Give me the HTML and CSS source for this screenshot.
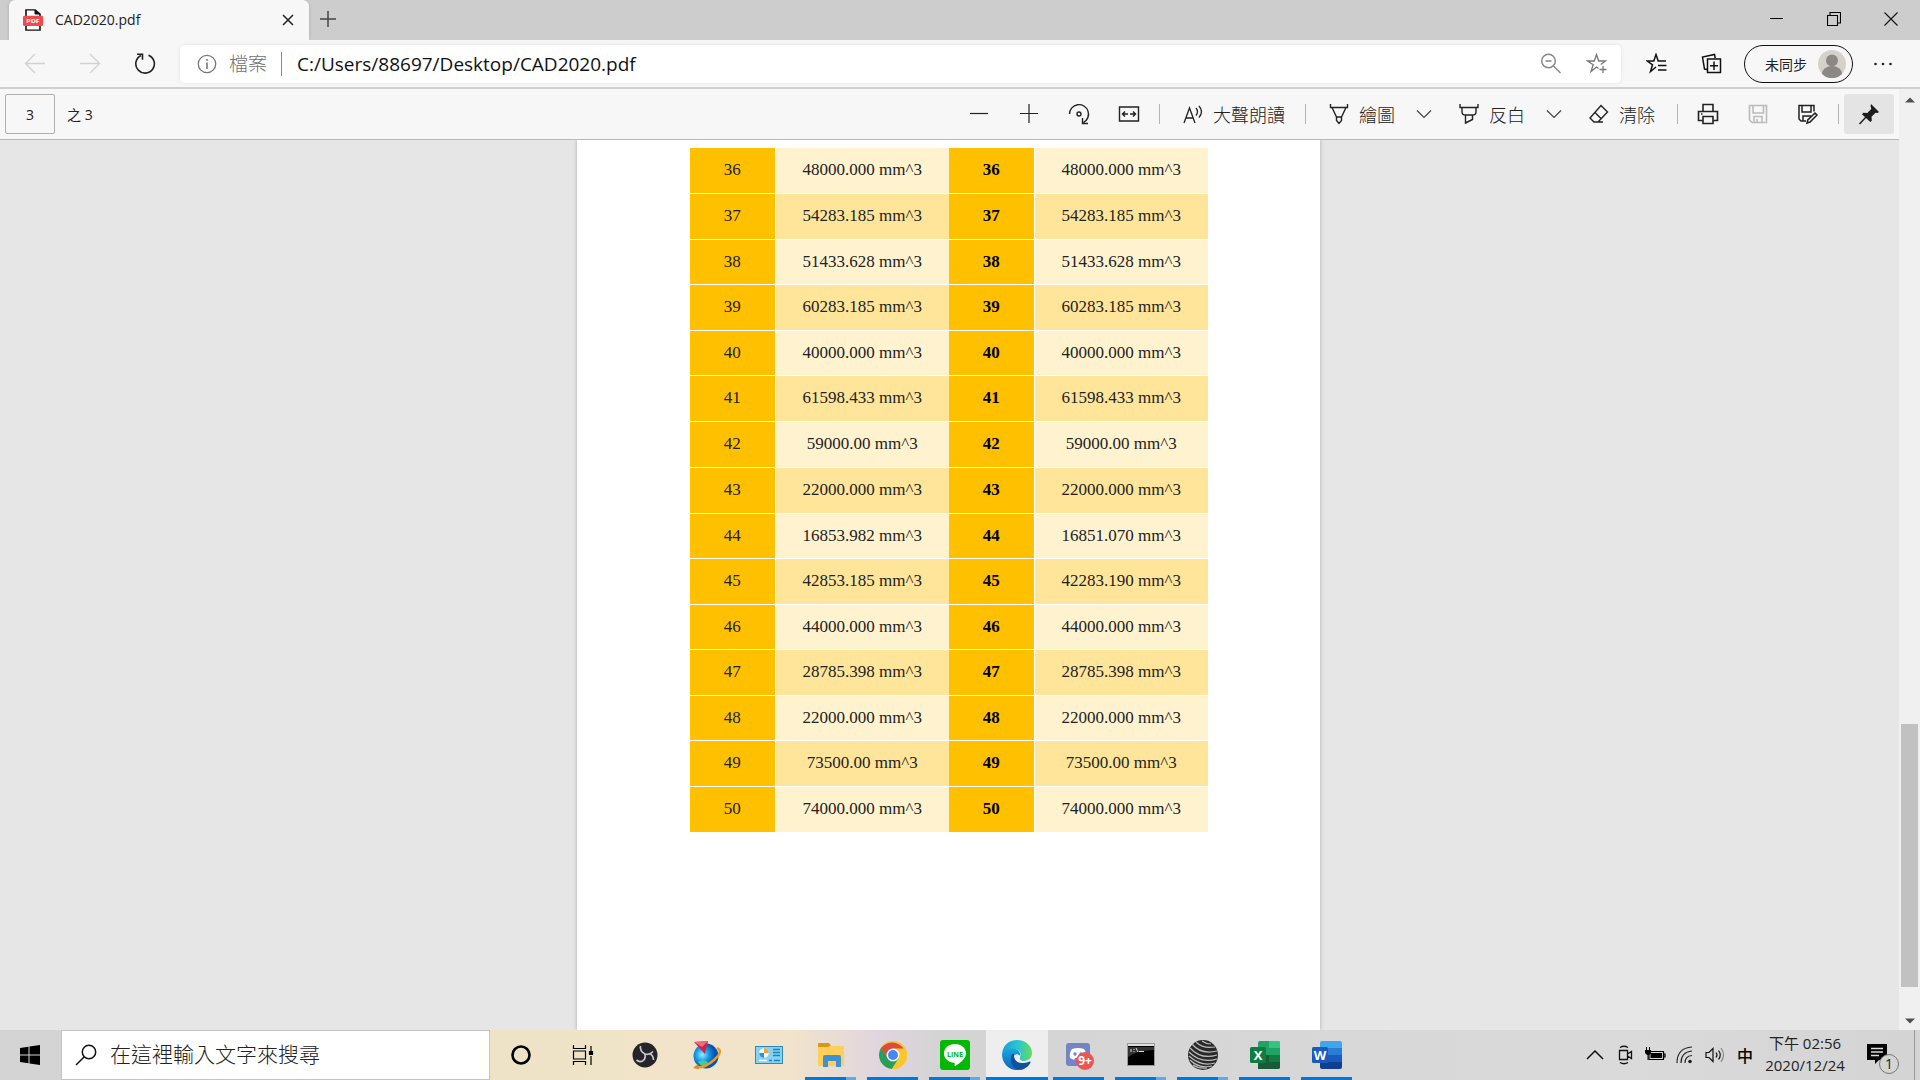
FILE: index.html
```html
<!DOCTYPE html>
<html lang="zh-Hant">
<head>
<meta charset="utf-8">
<title>CAD2020.pdf</title>
<link rel="stylesheet" href="styles.css">
</head>
<body>
<div class="screen">
  <header class="tabbar">
    <div class="tab">
      <svg class="tab-icon" width="20" height="22" viewBox="0 0 20 26" preserveAspectRatio="none"><path d="M3 1h9l5 5v19H3z" fill="#fff" stroke="#111" stroke-width="1.6"/><path d="M12 1v5h5z" fill="#111" stroke="#111"/><rect y="8" width="20" height="12" rx="1.5" fill="#f24a4a"/><text x="10" y="17" class="pdf-label">PDF</text></svg>
      <span class="tab-title">CAD2020.pdf</span>
      <button class="tab-close" aria-label="關閉索引標籤"><svg width="12" height="12" viewBox="0 0 12 12"><path d="M1 1l10 10M11 1L1 11" stroke="#222" stroke-width="1.5"/></svg></button>
    </div>
    <button class="new-tab" aria-label="新索引標籤"><svg width="16" height="16" viewBox="0 0 16 16"><path d="M8 0v16M0 8h16" stroke="#444" stroke-width="1.5"/></svg></button>
    <div class="window-controls">
      <button aria-label="最小化"><svg width="14" height="14" viewBox="0 0 14 14"><path d="M0 6.5h13" stroke="#000"/></svg></button>
      <button aria-label="還原"><svg width="14" height="14" viewBox="0 0 14 14"><path d="M.5 3.500h10v10H.5zM3 3V.5h10.500V11H11" fill="none" stroke="#000" stroke-width="1.1"/></svg></button>
      <button aria-label="關閉"><svg width="14" height="14" viewBox="0 0 14 14"><path d="M.5.5l13 13M13.500.5l-13 13" stroke="#111" stroke-width="1.1"/></svg></button>
    </div>
  </header>

  <nav class="navbar">
    <button class="nav-button" aria-label="上一頁" disabled><svg width="22" height="22" viewBox="0 0 22 22"><path d="M21 10.500H2M11 1l-9.500 9.500L11 20" fill="none" stroke="#d2d2d2" stroke-width="1.4"/></svg></button>
    <button class="nav-button" aria-label="下一頁" disabled><svg width="22" height="22" viewBox="0 0 22 22"><path d="M1 10.500h19M11 1l9.500 9.500L11 20" fill="none" stroke="#d2d2d2" stroke-width="1.4"/></svg></button>
    <button class="nav-button" aria-label="重新整理"><svg width="22" height="22" viewBox="0 0 22 22"><path d="M14.500 2.200A9.300 9.300 0 1 1 7 2.500M3 1.200h5.500v5.500" fill="none" stroke="#222" stroke-width="1.6"/></svg></button>
    <div class="address">
      <svg width="20" height="20" viewBox="0 0 20 20" fill="none" stroke="#777" stroke-width="1.3"><circle cx="10" cy="10" r="8.700"/><path d="M10 8.500V15M10 5v1.700" stroke-width="1.600"/></svg>
      <span class="scheme">檔案</span>
      <input class="url" aria-label="網址" value="C:/Users/88697/Desktop/CAD2020.pdf">
      <button class="address-button" aria-label="縮放"><svg width="22" height="22" viewBox="0 0 22 22" fill="none" stroke="#858585" stroke-width="1.4"><circle cx="8.500" cy="8" r="6.800"/><path d="M5.500 8h6M13.500 13l7 7"/></svg></button>
      <button class="address-button" aria-label="加入我的最愛"><svg width="22" height="22" viewBox="0 0 22 22" fill="none" stroke="#777" stroke-width="1.300"><path d="M12.500 15.500L10.500 14 5 18.500l2.200-6.700L1.500 8h6.800l2.200-6.500L12.700 8h6.800l-4.700 3.500M17 13v7M13.500 16.500h7"/></svg></button>
    </div>
    <button class="hub-button" aria-label="我的最愛"><svg width="22" height="22" viewBox="0 0 22 22" fill="none" stroke="#111" stroke-width="1.5"><path d="M10 14L4.500 18.500l2-6.700L1.200 8h6.600L10 1.500 12.200 8H20M12 12.500h8.500M12 17h8.500"/></svg></button>
    <button class="hub-button" aria-label="集錦"><svg width="22" height="22" viewBox="0 0 22 22" fill="none" stroke="#111" stroke-width="1.5"><path d="M6 16.500L3.500 16 1.500 4l12-2.500.7 3.500M6.500 6h13v13.500h-13zM13 8.500v8.500M9 12.800h8"/></svg></button>
    <button class="profile"><span>未同步</span><svg width="28" height="28" viewBox="0 0 28 28"><circle cx="14" cy="14" r="14" fill="#d5d2ce"/><circle cx="14" cy="10.500" r="6" fill="#8c8886"/><path d="M4 24a10 8 0 0 1 20 0 14 14 0 0 1-20 0z" fill="#8c8886"/></svg></button>
    <button class="more" aria-label="設定及其他"><svg width="20" height="4" viewBox="0 0 20 4" fill="#222"><circle cx="2.500" cy="2" r="1.300"/><circle cx="10" cy="2" r="1.300"/><circle cx="17.500" cy="2" r="1.300"/></svg></button>
  </nav>

  <main class="viewer">
    <section class="document">
      <div class="pdf-toolbar">
        <input class="page-number" id="page-number" value="3">
        <label class="page-total" for="page-number">之 3</label>
        <div class="tools">
          <button class="tool" aria-label="縮小"><svg width="20" height="20" viewBox="0 0 20 20"><path d="M1 9.500h18" stroke="#222" stroke-width="1.200"/></svg></button>
          <button class="tool" aria-label="放大"><svg width="20" height="20" viewBox="0 0 20 20"><path d="M1 9.500h18M10 0v19" stroke="#222" stroke-width="1.200"/></svg></button>
          <button class="tool" aria-label="旋轉"><svg width="22" height="22" viewBox="0 0 22 22" fill="none" stroke="#222" stroke-width="1.400"><path d="M1.500 11A9.500 9.500 0 1 1 15.500 19.500M20 20.500H14.500v-5.500"/><circle cx="11" cy="11" r="2"/></svg></button>
          <button class="tool" aria-label="調整成頁面寬度"><svg width="22" height="20" viewBox="0 0 22 20" fill="none" stroke="#222" stroke-width="1.400"><path d="M1.500 3h19v14h-19zM4.500 10H10M12 10h5.500M7 7.500L4.500 10 7 12.500M15 7.500l2.500 2.500-2.500 2.500"/></svg></button>
          <span class="divider"></span>
          <button class="tool-label read"><svg width="20" height="20" viewBox="0 0 20 20" fill="none" stroke="#222" stroke-width="1.300"><path d="M1 19L6.500 4 12 19M3 14h7M13 4q3 3.500 0 7.500M16 2q5 5.500 0 11.500"/></svg>大聲朗讀</button>
          <span class="divider"></span>
          <button class="tool-label draw"><svg width="20" height="22" viewBox="0 0 20 22" fill="none" stroke="#222" stroke-width="1.400"><path d="M1.500 1v3.500h17V1M3 4.500l4.500 9.500h5L17 4.500M7.500 14v3.500L10 20.500l2.500-3V14"/></svg>繪圖</button>
          <button class="tool-menu" aria-label="繪圖選項"><svg width="16" height="10" viewBox="0 0 16 10"><path d="M1 1.500l7 7 7-7" fill="none" stroke="#444" stroke-width="1.200"/></svg></button>
          <button class="tool-label"><svg width="20" height="22" viewBox="0 0 20 22" fill="none" stroke="#222" stroke-width="1.400"><path d="M1 1v3.500h18V1M3 4.500V9q0 3 3.500 3h7Q17 12 17 9V4.500M6.500 12v8l7-3.500V12"/></svg>反白</button>
          <button class="tool-menu" aria-label="反白選項"><svg width="16" height="10" viewBox="0 0 16 10"><path d="M1 1.500l7 7 7-7" fill="none" stroke="#444" stroke-width="1.200"/></svg></button>
          <button class="tool-label clear"><svg width="20" height="20" viewBox="0 0 20 20" fill="none" stroke="#222" stroke-width="1.400"><path d="M12 1.500l6.500 6.500L9 18H5l-4-4zM5.500 8l6.500 6.500M5 18h9"/></svg>清除</button>
          <span class="divider"></span>
          <button class="tool" aria-label="列印"><svg width="22" height="22" viewBox="0 0 22 22" fill="none" stroke="#222" stroke-width="1.600"><path d="M6 8V1.500h10V8M6 17.500H1.500V8.500h19v9H16M6 13.500h10v7H6zM4 11h1.500"/></svg></button>
          <button class="tool" aria-label="儲存" disabled><svg width="20" height="22" viewBox="0 0 20 22" fill="none" stroke="#bbb" stroke-width="1.600"><path d="M1.500 2.500h17v17H4l-2.500-2.500zM5 2.500V10h10.500V2.500M6 19.500v-6h8v6M9 16v3"/></svg></button>
          <button class="tool" aria-label="另存新檔"><svg width="22" height="22" viewBox="0 0 22 22" fill="none" stroke="#222" stroke-width="1.500"><path d="M17 8.500v-6H2V16l2 2h5M5 2.500V9h9V2.500M6 18v-5h8M10 20l.8-3L18 10l2 2-7 7z"/></svg></button>
          <span class="divider"></span>
          <button class="tool pinned" aria-label="釘選工具列"><svg width="22" height="22" viewBox="0 0 22 22"><path d="M13 1l8 8-1.500 1-2-.3-4 4 .3 4-1.500 1.300L4 11.200 5.300 9.800l4 .2 4-4-.7-3z" fill="#1c1c1c"/><path d="M9 13L1.500 21" stroke="#1c1c1c" stroke-width="1.500"/></svg></button>
        </div>
      </div>
      <div class="canvas">
        <article class="page">
          <table class="answers">
            <tbody>
              <tr><td>36</td><td>48000.000 mm^3</td><th>36</th><td>48000.000 mm^3</td></tr>
              <tr><td>37</td><td>54283.185 mm^3</td><th>37</th><td>54283.185 mm^3</td></tr>
              <tr><td>38</td><td>51433.628 mm^3</td><th>38</th><td>51433.628 mm^3</td></tr>
              <tr><td>39</td><td>60283.185 mm^3</td><th>39</th><td>60283.185 mm^3</td></tr>
              <tr><td>40</td><td>40000.000 mm^3</td><th>40</th><td>40000.000 mm^3</td></tr>
              <tr><td>41</td><td>61598.433 mm^3</td><th>41</th><td>61598.433 mm^3</td></tr>
              <tr><td>42</td><td>59000.00 mm^3</td><th>42</th><td>59000.00 mm^3</td></tr>
              <tr><td>43</td><td>22000.000 mm^3</td><th>43</th><td>22000.000 mm^3</td></tr>
              <tr><td>44</td><td>16853.982 mm^3</td><th>44</th><td>16851.070 mm^3</td></tr>
              <tr><td>45</td><td>42853.185 mm^3</td><th>45</th><td>42283.190 mm^3</td></tr>
              <tr><td>46</td><td>44000.000 mm^3</td><th>46</th><td>44000.000 mm^3</td></tr>
              <tr><td>47</td><td>28785.398 mm^3</td><th>47</th><td>28785.398 mm^3</td></tr>
              <tr><td>48</td><td>22000.000 mm^3</td><th>48</th><td>22000.000 mm^3</td></tr>
              <tr><td>49</td><td>73500.00 mm^3</td><th>49</th><td>73500.00 mm^3</td></tr>
              <tr><td>50</td><td>74000.000 mm^3</td><th>50</th><td>74000.000 mm^3</td></tr>
            </tbody>
          </table>
        </article>
      </div>
    </section>
    <div class="scrollbar">
      <svg width="10" height="6" viewBox="0 0 10 6"><path d="M0 5.500L5 .5l5 5z" fill="#505050"/></svg>
      <div class="track"><div class="thumb"></div></div>
      <svg width="10" height="6" viewBox="0 0 10 6"><path d="M0 .5l5 5 5-5z" fill="#505050"/></svg>
    </div>
  </main>

  <footer class="taskbar">
    <button class="start" aria-label="開始"><svg width="20" height="20" viewBox="0 0 20 20"><path d="M0 3l8.500-1.300v7.800H0zM9.500 1.500L20 0v9.500H9.500zM0 10.500h8.500v7.800L0 17zM9.500 10.500H20V20L9.500 18.500z"/></svg></button>
    <label class="search">
      <svg width="22" height="22" viewBox="0 0 22 22" fill="none" stroke="#111" stroke-width="1.500"><circle cx="14" cy="8" r="6.700"/><path d="M9.300 12.700L1 21"/></svg>
      <input placeholder="在這裡輸入文字來搜尋" aria-label="搜尋">
    </label>
    <div class="apps">
      <button class="app" aria-label="Cortana"><svg width="20" height="20" viewBox="0 0 20 20"><circle cx="10" cy="10" r="8.500" fill="none" stroke="#000" stroke-width="2.600"/></svg></button>
      <button class="app" aria-label="工作檢視"><svg width="22" height="20" viewBox="0 0 22 20" fill="none" stroke="#000" stroke-width="1.200"><path d="M1.500 0v3.500h12V0M1.500 20v-3.500h12V20M1.500 6h12v8h-12zM19 1v5M19 11v9"/><path d="M17.500 6.500h3v3h-3z" fill="#000"/></svg></button>
      <button class="app" aria-label="OBS"><svg width="26" height="26" viewBox="0 0 26 26"><circle cx="13" cy="13" r="12.500" fill="#24242a"/><g fill="none" stroke="#c9c9cb" stroke-width="1.700"><path d="M8.500 4q-1 5 4.500 8 4.500 1.500 8-2.500"/><path d="M13 12q1 5-2.500 7-3 1.500-6-1"/><path d="M17 11.500q4.500 1.500 4.500 6.500"/></g></svg></button>
      <button class="app" aria-label="地球"><svg width="30" height="30" viewBox="0 0 30 30"><defs><radialGradient id="globe" cx=".35" cy=".45"><stop offset="0" stop-color="#8ef0ff"/><stop offset=".5" stop-color="#1b9fe8"/><stop offset="1" stop-color="#0753b5"/></radialGradient></defs><circle cx="14" cy="16" r="12.500" fill="url(#globe)"/><path d="M6 22q4-3 8-1t-1 5q-5 0-7-4z" fill="#43c9a0"/><path d="M25 8q7 3-3 12T3 27" fill="none" stroke="#e99b24" stroke-width="2.400"/><path d="M1 28l5-4 1 5z" fill="#e9851c"/><path d="M2 2l14-1-3 13z" fill="#c8274c"/><path d="M2 2l14-1-6 6z" fill="#ef6981"/></svg></button>
      <button class="app" aria-label="控制台"><svg width="28" height="20" viewBox="0 0 28 20"><rect x=".5" y="1.500" width="27" height="17" fill="#83d4f4" stroke="#3188bb"/><circle cx="9" cy="8" r="4.800" fill="#eef9ff"/><path d="M9 3.200V8h4.800A4.800 4.800 0 0 0 9 3.200z" fill="#f2a03a"/><path d="M9 8H4.200A4.800 4.800 0 0 0 9 12.800z" fill="#3a8cd0"/><path d="M18 4.500h7M18 7.500h7M18 10.500h7M14 15.500h3M19 15.500h6" stroke="#267fb5" stroke-width="1.400"/><path d="M4 15.500h8" stroke="#fff" stroke-width="1.500"/></svg></button>
      <button class="app running stacked" aria-label="檔案總管"><svg width="28" height="26" viewBox="0 0 28 26"><path d="M1 2q0-1 1-1h10l2 3v4H1z" fill="#d99a11"/><path d="M1 5h10l2-1h14v20H1z" fill="#fed05a"/><path d="M6 25V15q0-2 2-2h14q2 0 2 2v10h-5v-6h-8v6z" fill="#3f91d1"/></svg></button>
      <button class="app running" aria-label="Chrome"><svg width="28" height="28" viewBox="0 0 28 28"><circle cx="14" cy="14" r="14" fill="#fbc52f"/><path d="M14 14H27A14 14 0 0 0 1.900 7L8 17z" fill="#dc4b3e"/><path d="M1.900 7A14 14 0 0 0 13 28l6.500-10.500L14 14 8.500 17z" fill="#23a05a"/><path d="M14 7.500h12.400A14 14 0 0 1 13 28l6.500-10.500z" fill="#fbc52f"/><circle cx="14" cy="14" r="6.500" fill="#fff"/><circle cx="14" cy="14" r="5" fill="#4688f1"/></svg></button>
      <button class="app running stacked" aria-label="LINE"><svg width="30" height="30" viewBox="0 0 30 30"><rect width="30" height="30" rx="3" fill="#00b900"/><path d="M15 4c6.500 0 11 4.200 11 9.300 0 5.200-5 9-10.500 12.700-1 .6-1-.5-.8-3C8 22.500 4 18.500 4 13.300 4 8.200 8.500 4 15 4z" fill="#fff"/><text x="15" y="16.500" class="line-label">LINE</text></svg></button>
      <button class="app running active" aria-label="Edge"><svg width="30" height="30" viewBox="0 0 30 30"><defs><linearGradient id="wave" x1="0" x2="1"><stop stop-color="#16a1dc"/><stop offset=".55" stop-color="#2bc7cf"/><stop offset="1" stop-color="#69dc58"/></linearGradient><linearGradient id="body" x1="0" y1="0" x2="0" y2="1"><stop stop-color="#1aa5e0"/><stop offset="1" stop-color="#0f65bd"/></linearGradient></defs><path d="M0 14C1 5 7 0 15 0c9 0 15 6 15 13 0 5-4 8-8 8-4 0-5-2-4-4 2-4-1-8-6-8-6 0-10 3-12 5z" fill="url(#wave)"/><path d="M0 14c3-5 8-6 12-5 4 0 7 3 6 7-2-3-7-2-7 3 0 6 5 10 8 10.500C9 32 0 25 0 14z" fill="url(#body)"/><path d="M10 14c-4 8 2 16 9 16 4-1 8-4 9.500-7.500.3-1-.5-1.200-1.500-.7C20 25 11 22 12 14z" fill="#12509b"/><path d="M18 17c-1 2 0 4 4 4q-6 3-8.500-1-1.500-3.500.5-5 3-1 4 2z" fill="#eee"/></svg></button>
      <button class="app running" aria-label="Discord"><svg width="30" height="30" viewBox="0 0 30 30"><rect x="2" y="3" width="24" height="23" rx="3" fill="#7485c6"/><path d="M8 9q6-2 12 0 3 4 2 9l-4 2-1-2h-6l-1 2-4-2q-1-5 2-9z" fill="#fff"/><circle cx="11" cy="14" r="1.700" fill="#7485c6"/><circle cx="17" cy="14" r="1.700" fill="#7485c6"/><circle cx="21" cy="21" r="9" fill="#ed5555"/><text x="21" y="25" class="badge-label">9+</text></svg></button>
      <button class="app running stacked" aria-label="命令提示字元"><svg width="28" height="24" viewBox="0 0 28 24"><rect x=".5" y=".5" width="27" height="22" fill="#000" stroke="#999"/><path d="M1 2h26" stroke="#ddd" stroke-width="2"/><path d="M1 4h26v3Q8 8 1 14z" fill="#333"/><path d="M4 6v3M7 6v1M7 8v1M9 5l2 4M12 8.500h5" stroke="#ddd"/></svg></button>
      <button class="app running stacked" aria-label="Rhino"><svg width="30" height="30" viewBox="0 0 30 30"><circle cx="15" cy="15" r="15" fill="#2a2a2a"/><g fill="none" stroke="#bcbcbc" stroke-width="1.200"><path d="M8 2q7 7 19 5M4 4q9 11 25 7M2 8q11 12 27 7M1 12q12 12 28 7M1 16q12 11 26 7M2 20q9 9 22 6M5 25q6 4 14 3M14 1q4 3 9 3"/></g></svg></button>
      <button class="app running" aria-label="Excel"><svg width="30" height="28" viewBox="0 0 30 28"><rect x="8" width="22" height="28" rx="2" fill="#21a366"/><path d="M19 0h9q2 0 2 2v5H19z" fill="#33c481"/><path d="M8 14h22v12q0 2-2 2H8z" fill="#185c37"/><path d="M19 14h11v7H19z" fill="#107c41"/><rect x="0" y="6" width="16" height="16" rx="1.500" fill="#107c41"/><text x="8" y="19" class="office-label">X</text></svg></button>
      <button class="app running" aria-label="Word"><svg width="30" height="28" viewBox="0 0 30 28"><path d="M8 2q0-2 2-2h18q2 0 2 2v5H8z" fill="#41a5ee"/><path d="M8 7h22v7H8z" fill="#2b7cd3"/><path d="M8 14h22v7H8z" fill="#185abd"/><path d="M8 21h22v5q0 2-2 2H10q-2 0-2-2z" fill="#103f91"/><rect y="6" width="16" height="16" rx="1.500" fill="#185abd"/><text x="8" y="19" class="office-label">W</text></svg></button>
    </div>
    <div class="tray">
      <button class="tray-icon" aria-label="顯示隱藏的圖示"><svg width="18" height="10" viewBox="0 0 18 10"><path d="M1 9l8-8 8 8" fill="none" stroke="#111" stroke-width="1.500"/></svg></button>
      <button class="tray-icon" aria-label="立即開會"><svg width="18" height="20" viewBox="0 0 18 20" fill="none" stroke="#111" stroke-width="1.300"><path d="M3.500 5.500h8v9h-8zM11.500 9l4-2.500v7l-4-2.500M4 2.500Q8 0 12 2.500M4 17.500q4 2.500 8 0"/></svg></button>
      <button class="tray-icon" aria-label="電池"><svg width="22" height="16" viewBox="0 0 22 16"><path d="M5 4.500h14.500v8H5zM19.500 7H21v3h-1.500" fill="none" stroke="#000" stroke-width="1.200"/><path d="M6.500 6H18v5H6.500zM1 3h6v3L5 8H3L1 6zM2 0h1v3H2zM5 0h1v3H5zM3.500 8h1v5h-1z"/></svg></button>
      <button class="tray-icon" aria-label="網路"><svg width="18" height="18" viewBox="0 0 18 18" fill="none" stroke="#222" stroke-width="1.200"><path d="M1 17Q1 2 16 1M5 17Q5 6 16 5M9 17q0-7 7-7.500"/><circle cx="14" cy="15.500" r="1.200" fill="#000"/></svg></button>
      <button class="tray-icon" aria-label="音量"><svg width="20" height="18" viewBox="0 0 20 18" fill="none" stroke="#111" stroke-width="1.200"><path d="M1 6.500h3l4-4v13l-4-4H1zM11 6.500q2 2.500 0 5M13.500 4.500q3.500 4.500 0 9"/><path d="M16 2q5 7 0 14" stroke="#888"/></svg></button>
      <button class="ime">中</button>
      <button class="clock"><span>下午 02:56</span><span>2020/12/24</span></button>
      <button class="notice" aria-label="通知"><svg width="20" height="20" viewBox="0 0 20 20"><path d="M0 0h20v16h-8l-4 4v-4H0z"/><path d="M4 4.500h12M4 8h12M4 11.500h8" stroke="#ddd" stroke-width="1.500"/></svg><span class="count">1</span></button>
      <span class="show-desktop"></span>
    </div>
  </footer>
</div>
</body>
</html>
```
FILE: styles.css
```css
* { box-sizing: border-box; }
body {
  margin: 0;
  font-family: "Open Sans", "Noto Sans CJK TC", sans-serif;
  color: #222;
}
button, input {
  margin: 0;
  padding: 0;
  border: 0;
  background: none;
  color: inherit;
  font: inherit;
}
button { display: flex; align-items: center; justify-content: center; flex: none; }
svg { display: block; flex: none; }

.screen { display: flex; flex-direction: column; height: 100vh; overflow: hidden; }

/* Tab strip */
.tabbar { display: flex; flex: none; height: 40px; padding-left: 9px; background: #cdcdcd; }
.tab {
  display: flex;
  align-items: center;
  width: 300px;
  padding: 0 14px 1px;
  border-radius: 6px 6px 0 0;
  background: #f7f7f7;
  box-shadow: 0 0 3px #aaa;
}
.tab-title { flex: 1; padding-left: 12px; font-size: 14px; }
.tab-close { width: 14px; height: 24px; }
.new-tab { width: 38px; padding-bottom: 2px; }
.window-controls { display: flex; margin-left: auto; padding: 0 1px 3px 0; }
.window-controls button { width: 57px; }
.pdf-label { fill: #fff; font: bold 7px "Open Sans", sans-serif; text-anchor: middle; }

/* Address row */
.navbar {
  position: relative;
  display: flex;
  flex: none;
  align-items: center;
  height: 49px;
  padding: 0 7px;
  border-bottom: 2px solid #d0d0d0;
  background: #f7f7f7;
}
.nav-button { width: 55px; height: 38px; }
.address {
  display: flex;
  flex: 1;
  align-items: center;
  height: 38px;
  margin: 0 8px;
  padding: 0 1px 0 17px;
  border-radius: 5px;
  background: #fff;
  box-shadow: 0 0 4px #e4e4e4;
}
.scheme {
  margin-left: 12px;
  padding-right: 14px;
  border-right: 1px solid #888;
  color: #707070;
  font-size: 19px;
  font-weight: 300;
  line-height: 24px;
}
.url { flex: 1; min-width: 0; padding-left: 15px; color: #111; font-size: 19px; }
.address-button { width: 46px; height: 38px; }
.hub-button { width: 55px; height: 38px; }
.profile {
  gap: 11px;
  width: 109px;
  height: 38px;
  margin-left: 5px;
  padding-left: 14px;
  border: 1px solid #111;
  border-radius: 19px;
  font-size: 14px;
}
.more { width: 60px; height: 38px; }

/* PDF viewer */
.viewer { display: flex; flex: 1; min-height: 0; }
.document { display: flex; flex: 1; flex-direction: column; min-width: 0; }
.pdf-toolbar {
  display: flex;
  flex: none;
  align-items: center;
  height: 51px;
  padding: 0 5px;
  border-bottom: 1px solid #b8b8b8;
  background: #f7f7f7;
}
.page-number {
  width: 50px;
  height: 40px;
  border: 1px solid #b0b0b0;
  border-radius: 2px;
  font-size: 14px;
  text-align: center;
}
.page-total { padding-left: 12px; font-size: 14px; }
.tools { display: flex; align-items: center; margin-left: auto; }
.tool { width: 50px; height: 40px; }
.tool-menu { width: 40px; height: 40px; }
.tool-label {
  justify-content: flex-start;
  gap: 10px;
  width: 90px;
  height: 40px;
  padding-left: 15px;
  font-size: 18px;
  font-weight: 300;
}
.tool-label.read { width: 135px; padding-left: 18px; }
.tool-label.draw { width: 93px; padding-left: 18px; }
.tool-label.clear { width: 98px; }
.divider { width: 1px; height: 20px; margin: 0 5px; background: #b5b5b5; }
.pinned { border-radius: 3px; background: #e4e4e4; }

.canvas { display: flex; flex: 1; justify-content: center; min-height: 0; padding-right: 2px; background: #e6e6e6; }
.page { width: 743px; padding-top: 8px; background: #fff; box-shadow: 0 0 4px #aaa; clip-path: inset(0 -6px); }
.answers {
  width: 518px;
  margin: 0 auto;
  border-collapse: collapse;
  table-layout: fixed;
  color: #222;
  font-family: "Liberation Serif", serif;
  font-size: 17px;
  text-align: center;
}
.answers td, .answers th { height: 45px; padding: 0; border-bottom: 1px solid #fff; }
.answers tr:nth-child(even) td, .answers tr:nth-child(8n + 7) td { height: 46px; }
.answers td { width: 173px; background: #fff2cf; }
.answers tr:nth-child(even) td { background: #ffe599; }
.answers th { width: 86px; background: #ffc000; color: #000; }
.answers tr td:first-child, .answers tr:nth-child(even) td:first-child { width: 86px; background: #ffc000; }
.answers td + td { border-left: 1px solid #fff; }
.answers th + td { border-left: 1px solid #fff; }

.scrollbar {
  display: flex;
  flex: none;
  flex-direction: column;
  align-items: center;
  width: 21px;
  padding: 8px 0 6px;
  background: #f0f0f0;
}
.track { display: flex; flex: 1; flex-direction: column; justify-content: flex-end; width: 17px; padding: 6px 0 31px; }
.thumb { height: 30%; background: #c1c1c1; }

/* Taskbar */
.taskbar {
  display: flex;
  flex: none;
  height: 50px;
  background: linear-gradient(90deg, #d4d4d4 0, #d4d4d4 25%, #eee3c6 25%, #f2e4cb 41%, #dfd5df 46%, #d4d4d4 49%, #dadada 85%, #d4d4d4 100%);
}
.start { width: 61px; padding-right: 1px; }
.search {
  display: flex;
  align-items: center;
  gap: 13px;
  width: 429px;
  padding-left: 13px;
  border: 1px solid #c4c4c4;
  background: #fff;
}
.search input { flex: 1; min-width: 0; padding-bottom: 2px; font-size: 21px; font-weight: 300; }
.search input::placeholder { color: #222; opacity: 1; }
.apps { display: flex; }
.app { position: relative; width: 62px; }
.app.running::after {
  content: "";
  position: absolute;
  bottom: 0;
  left: 5px;
  right: 6px;
  height: 3px;
  background: #0078d7;
}
.app.stacked::after { background: linear-gradient(90deg, #0078d7 80%, #62aae6 80%); }
.app.active { background: #eee; }
.app.active::after { left: 0; right: 0; }
.line-label { fill: #00b900; font: bold 7px "Open Sans", sans-serif; text-anchor: middle; }
.badge-label { fill: #fff; font: bold 12px "Open Sans", sans-serif; text-anchor: middle; }
.office-label { fill: #fff; font: bold 13px "Open Sans", sans-serif; text-anchor: middle; }
.tray { display: flex; margin-left: auto; }
.tray-icon { width: 30px; }
.ime { width: 30px; color: #000; font-size: 16px; font-weight: 500; }
.clock { flex-direction: column; width: 90px; padding-bottom: 2px; font-size: 15px; line-height: 22px; }
.notice { position: relative; width: 64px; padding: 0 10px 2px 0; }
.count {
  position: absolute;
  top: 24px;
  left: 29px;
  width: 20px;
  height: 20px;
  border: 1px solid #777;
  border-radius: 50%;
  background: #d4d4d4;
  font-size: 14px;
  line-height: 18px;
}
.show-desktop { width: 6px; border-left: 1px solid #999; }
```
